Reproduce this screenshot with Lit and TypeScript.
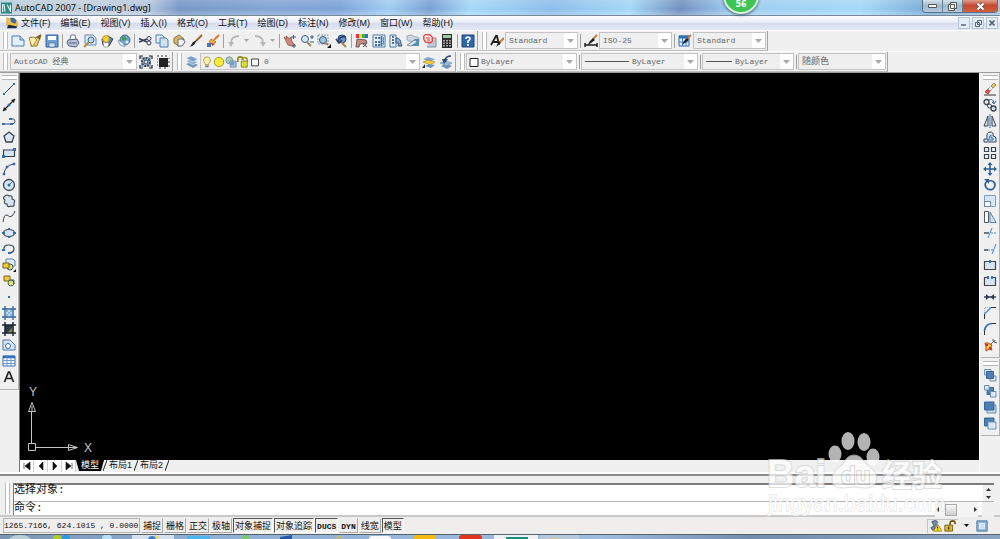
import { LitElement, html, svg, css } from "lit";
import { customElement } from "lit/decorators.js";
import { classMap } from "lit/directives/class-map.js";

const B = "#2f6fb5";
const D = "#3a4450";
const L = "#d6e6f4";
const Y = "#f2cf3a";

const ICONS: Record<string, unknown> = {
  new: svg`<path d="M1 2H9L13 6V12H1Z" fill="#e3f0fa" stroke="#4d7fae"/><path d="M9 2V6H13" fill="#a9cbe8" stroke="#4d7fae"/>`,
  open: svg`<path d="M2 3L7 4L13 1L9 12L3 12Z" fill="#f0d27a" stroke="#8f7430"/><path d="M1 4L6 3L9 6L4 13Z" fill="#fbeeb5" stroke="#a98a3c"/><path d="M8 3L13 0L12 6" fill="#7a6530"/>`,
  save: svg`<path d="M1 1H13V13H1Z" fill="#6f9fd0" stroke="#345f96"/><path d="M3 2H11V6H3Z" fill="#fff"/><path d="M4 9H10V13H4Z" fill="#d7e4f0" stroke="#345f96" stroke-width=".6"/>`,
  print: svg`<path d="M4 6L5 1H9L10 6" fill="#fff" stroke="#66769a"/><path d="M2 6L11 5L13 9L10 13L3 12L1 9Z" fill="#b8c2d8" stroke="#515f82"/><path d="M3 9L11 9" stroke="#515f82"/>`,
  preview: svg`<path d="M2 1H10L13 4V11H4L2 9Z" fill="#e2eefa" stroke="#5a89b5"/><circle cx="8" cy="6" r="3" fill="#b9d9f2" stroke="#3f607f"/><path d="M6 8L1 13" stroke="#b08c4e" stroke-width="2"/>`,
  publish: svg`<path d="M2 5L8 2L13 5L9 12L3 11Z" fill="#5e7fb3" stroke="#34486d"/><circle cx="6" cy="5" r="3.5" fill="${Y}" stroke="#9d7d1a" stroke-width=".7"/><path d="M3 8L9 9L8 13H4Z" fill="#fff" stroke="#777" stroke-width=".6"/>`,
  web: svg`<circle cx="8" cy="6" r="5" fill="#6fa6d8" stroke="#49698c"/><path d="M5 3Q8 1 10 5Q7 8 5 6Z" fill="#4f9a50"/><path d="M1 6L6 9L8 13L3 11Z" fill="#e5edf6" stroke="#7089a5" stroke-width=".7"/><circle cx="10" cy="8" r="1.5" fill="#e9f5ff"/>`,
  cut: svg`<path d="M1 4.500L9 8M1 8L9 5" stroke="#33425a" stroke-width="1.400"/><circle cx="11" cy="4.500" r="2" fill="none" stroke="#33425a"/><circle cx="11" cy="9" r="2" fill="none" stroke="#33425a"/>`,
  copy: svg`<path d="M1 1H7L9 3V9H1Z" fill="#e6f1fb" stroke="#4d7fae"/><path d="M5 4H11L13 6V13H5Z" fill="#cfe2f4" stroke="#4d7fae"/>`,
  paste: svg`<path d="M2 4L7 1L12 5L11 10L7 12L2 9Z" fill="#d9b964" stroke="#8b7233"/><path d="M6 5L11 5L13 8L10 12H6Z" fill="#eef3fa" stroke="#667"/>`,
  match: svg`<path d="M13 1L7 7" stroke="#98652f" stroke-width="2"/><path d="M8 6L5 11L1 13L4 8Z" fill="#222"/>`,
  brush: svg`<path d="M13 1L8 6" stroke="#e07a26" stroke-width="2"/><path d="M5 5L10 8L7 10L3 8Z" fill="#f1b63a" stroke="#a45e10" stroke-width=".7"/><path d="M1 9H5V13H1Z" fill="#3f77bd"/><path d="M5 9L9 10L6 12Z" fill="#c33"/>`,
  undo: svg`<path d="M12 2Q4 2 4 9" fill="none" stroke="#b8b8b8" stroke-width="1.800"/><path d="M1 8H7L4 13Z" fill="#b8b8b8"/>`,
  redo: svg`<path d="M2 2Q10 2 10 9" fill="none" stroke="#b8b8b8" stroke-width="1.800"/><path d="M7 8H13L10 13Z" fill="#b8b8b8"/>`,
  pan: svg`<path d="M1 3L4 5L3 2L7 5L8 3L9 8L12 11L9 12L5 11Z" fill="#cf8a7e" stroke="#8f4b44" stroke-width=".8"/><path d="M8 3H13M10.500 1V5M9 12H13M11 10V14" stroke="#345a86"/>`,
  zoomrt: svg`<circle cx="5" cy="5" r="3.500" fill="#cfe6f8" stroke="#44617e"/><path d="M7 8L11 12" stroke="#a7834b" stroke-width="2"/><path d="M10 3H14M12 1V5M10 8H14" stroke="#345a86"/>`,
  zoomwin: svg`<path d="M1 1H11V10H1Z" fill="none" stroke="#7d98b4" stroke-dasharray="2 1"/><circle cx="6" cy="6" r="3.500" fill="#9fc5e8" stroke="#35506c"/><path d="M8 8L11 11" stroke="#a7834b" stroke-width="2"/><path d="M14 10V14H10Z" fill="#111"/>`,
  zoomprev: svg`<circle cx="8" cy="5" r="4" fill="#6c97c7" stroke="#27415f"/><path d="M7 8L12 13" stroke="#a7834b" stroke-width="2"/><path d="M12 3Q6 2 5 6M2 5L5 9L8 6" fill="none" stroke="#1f3f66" stroke-width="1.500"/>`,
  props: svg`<path d="M1 0H4V4H1Z" fill="#e33"/><path d="M4 0H7V4H4Z" fill="#e7d631"/><path d="M7 0H10V4H7Z" fill="#31b84a"/><path d="M10 0H13V4H10Z" fill="#46c"/><path d="M2 5L11 6L12 9L5 10L4 13H1Z" fill="#c98c7c" stroke="#5a4250" stroke-width=".8"/><path d="M8 10L12 13M12 9L8 13" stroke="#445"/>`,
  center: svg`<path d="M1 1H13V13H1Z" fill="#eef6fc" stroke="#4579ab"/><path d="M3 3H5V5H3ZM3 7H5V9H3ZM6 3H8V5H6ZM6 7H8V9H6ZM3 10H5V12H3ZM6 10H8V12H6Z" fill="#3d6d9d"/><path d="M9.500 2V12" stroke="#4579ab" stroke-width="2"/><path d="M11.500 3V11" stroke="#b48a34"/>`,
  palettes: svg`<path d="M1 1H7V13H1Z" fill="#e5f0fa" stroke="#4579ab"/><path d="M3 3H5M3 6H5M3 9H5" stroke="#345" stroke-width="1.500"/><path d="M7 4Q12 4 12 10L13 12L9 12L10 9L7 9Z" fill="#8fb1d3" stroke="#35577c"/>`,
  sheet: svg`<path d="M1 2L5 1L13 4V8L8 9L1 6Z" fill="#cdd6df" stroke="#8797a8" stroke-width=".7"/><path d="M1 11L9 5L13 5V12H4Z" fill="#4f8fb8"/><path d="M1 11L9 6L11 8L5 12Z" fill="#dfe8ef" stroke="#678" stroke-width=".6"/>`,
  markup: svg`<path d="M5 4H13V13H4" fill="#bfcbd8" stroke="#8090a0"/><path d="M2 1Q4 0 5 1Q7 0 8 2Q10 3 9 5Q10 8 8 8Q6 10 5 8Q2 9 2 7Q0 5 1 4Q0 2 2 1Z" fill="#ffe9e9" stroke="#e23333" stroke-width="1.200"/><path d="M3 4H7M4 6H7" stroke="#e23333"/>`,
  calc: svg`<path d="M2 0H12V14H2Z" fill="#2b2b2b"/><path d="M3 1H11V4H3Z" fill="#9fc79f"/><path d="M4 6V13M7 6V13M10 6V13" stroke="#cfcfcf" stroke-width="1.500" stroke-dasharray="1.500 1"/>`,
  help: svg`<path d="M1 1H13V13H1Z" fill="#2f69a9" stroke="#1e4878"/><path d="M5 5Q5 3 7 3Q9 3 9 5Q9 6 7 7V9M7 10V12" fill="none" stroke="#fff" stroke-width="1.600"/>`,
  textstyle: svg`<path d="M1 11L6 2H7L9 11M3 8H9" fill="none" stroke="#222" stroke-width="1.800"/><path d="M14 4L10 8" stroke="#c07b3d" stroke-width="2"/><path d="M9 7L11 9L6 13Z" fill="#222"/>`,
  dimstyle: svg`<path d="M1 11H13M1 9V13M13 9V13" stroke="#222" stroke-width="1.500"/><path d="M13 1L9 5" stroke="#c07b3d" stroke-width="2"/><path d="M9 4L11 6L3 12L6 7Z" fill="#222"/>`,
  tablestyle: svg`<path d="M1 2H11V12H1Z" fill="#dcebfa" stroke="${B}"/><path d="M1 3H11" stroke="${B}" stroke-width="3"/><path d="M1 8H11M4.500 3V12M8 3V12" stroke="${B}" stroke-width=".8"/><path d="M13 1L9 5" stroke="#c07b3d" stroke-width="2"/><path d="M9 4L11 6L4 11L6 7Z" fill="#222"/>`,
  gear: svg`<path d="M1 4V1H4M10 1H13V4M1 10V13H4M13 10V13H10" fill="none" stroke="#222" stroke-width="1.200"/><path d="M2 2H12V12H2Z" fill="#a9bccf"/><circle cx="7" cy="7" r="4" fill="none" stroke="#34495e" stroke-width="2" stroke-dasharray="2 1"/><circle cx="7" cy="7" r="2" fill="#dfe8f0" stroke="#34495e"/>`,
  space: svg`<path d="M3 3H12V12H3Z" fill="#222"/><path d="M1 1H3M5 1H7M9 1H11M1 4H2M1 7H2M1 10H2M13 3V4M13 6V8M13 10V12M3 13H5M8 13H10" stroke="#333"/>`,
  layers: svg`<path d="M1 9L6 7L13 10L8 13Z" fill="#6f94b8"/><path d="M1 6L6 4L13 7L8 10Z" fill="#8fb0cf" stroke="#fff" stroke-width=".5"/><path d="M1 3L6 1L13 4L8 7Z" fill="#7aa0c5" stroke="#fff" stroke-width=".5"/>`,
  bulb: svg`<path d="M7 1Q11 1 11 5Q11 7 9 9V10H5V9Q3 7 3 5Q3 1 7 1Z" fill="#fff7a8" stroke="#a9973c"/><path d="M5 11H9V13H5Z" fill="#777"/>`,
  sun: svg`<circle cx="7" cy="7" r="5.500" fill="#f7ea3a" stroke="#a08b22"/>`,
  sunvp: svg`<circle cx="5" cy="5" r="4" fill="#a9cfa9" stroke="#6b8fa5"/><path d="M6 6H13V13H6Z" fill="#a3c2dd" stroke="#6d8eae"/><circle cx="8" cy="8" r="3" fill="#7ba0c0"/>`,
  lock: svg`<path d="M1 7V4Q1 1 4 1Q7 1 7 5" fill="none" stroke="#938b20" stroke-width="2"/><path d="M6 5V4Q7 2 9 2Q12 2 12 5V7" fill="none" stroke="#a59d2a" stroke-width="2"/><path d="M5 6H12V13H5Z" fill="#d8dc3c" stroke="#7f8224"/>`,
  swatch: svg`<path d="M3 3.500H11V11.500H3Z" fill="#fff" stroke="#222"/>`,
  laymk: svg`<path d="M1 4L6 2L13 4L8 7Z" fill="#86a8c9"/><path d="M1 7L6 5L13 7L8 10Z" fill="${Y}" stroke="#8c7730" stroke-width=".5"/><path d="M3 11L7 9L13 10L9 13Z" fill="#6f94b8"/><path d="M0 13L3 9V13Z" fill="#234"/>`,
  layprev: svg`<path d="M2 11L7 9L13 11L8 14Z" fill="#6f94b8"/><path d="M1 8L7 6L13 8L8 11Z" fill="#9bb8d4" stroke="#5c7fa3" stroke-width=".5"/><path d="M12 1Q7 1 6 5" fill="none" stroke="#27496f" stroke-width="1.600"/><path d="M3 4H9L5 9Z" fill="#27496f"/>`,
  line: svg`<path d="M2 12L12 2" stroke="${D}"/><path d="M1 11H3V13H1ZM11 1H13V3H11Z" fill="${B}"/>`,
  xline: svg`<path d="M1 13L13 1" stroke="#222" stroke-width="1.200"/><path d="M1 13L2 9L5 12ZM13 1L9 2L12 5Z" fill="#222"/><circle cx="7" cy="7" r="1.500" fill="${B}"/>`,
  pline: svg`<path d="M1 10H10Q13 10 13 7Q13 4 9 5" fill="none" stroke="#456"/><path d="M0 9H3V11H0ZM8 9H11V11H8ZM7 4H10V6H7Z" fill="${B}"/>`,
  polygon: svg`<path d="M7 2L12 6L10 12H4L2 6Z" fill="${L}" stroke="${D}" stroke-width="1.300"/>`,
  rect: svg`<path d="M1.500 4H12.500V10.500H1.500Z" fill="${L}" stroke="${D}" stroke-width="1.200"/><path d="M0 9H3V12H0ZM11 2H14V5H11Z" fill="${B}"/>`,
  arc: svg`<path d="M2 12Q3 3 12 2" fill="none" stroke="${D}"/><path d="M1 11H3V13H1ZM4 4H6V6H4ZM11 1H13V3H11Z" fill="${B}" stroke="${B}" stroke-width=".5"/>`,
  circle: svg`<circle cx="7" cy="7" r="5.500" fill="${L}" stroke="${D}" stroke-width="1.300"/><path d="M7 7L11 3" stroke="${B}"/><circle cx="7" cy="7" r="1.500" fill="${B}"/>`,
  cloud: svg`<path d="M3 6Q0 4 3 2Q5 0 7 2Q11 1 10 5Q14 6 12 9Q13 13 9 12Q5 14 5 10Q1 10 3 6Z" fill="${L}" stroke="${D}" stroke-width="1.100"/>`,
  spline: svg`<path d="M1 12Q2 4 5 5Q8 8 10 6Q12 4 13 1" fill="none" stroke="${D}"/>`,
  ellipse: svg`<ellipse cx="7" cy="7" rx="5.500" ry="3.500" fill="${L}" stroke="${D}" stroke-width="1.200"/><path d="M0 6H3V8H0ZM11 6H14V8H11ZM6 2H8V4H6ZM6 10H8V12H6Z" fill="${B}"/>`,
  earc: svg`<path d="M2 8Q1 3 7 3Q12 3 12 7Q12 10 8 11" fill="none" stroke="${D}" stroke-width="1.200"/><path d="M0 7H3V9H0ZM6 10H9V12H6Z" fill="${B}"/>`,
  insert: svg`<path d="M4 1H11L13 3V8H4Z" fill="#dcebf7" stroke="#5d87ad"/><circle cx="8" cy="9" r="3" fill="#dfe06a" stroke="#456"/><path d="M1 5H7V10H1Z" fill="${Y}" stroke="#6f6326"/><path d="M14 11V14H11Z" fill="#111"/>`,
  block: svg`<path d="M2 2H8V7H2Z" fill="${Y}" stroke="#6f6326"/><circle cx="9" cy="9" r="3" fill="#dfe06a" stroke="#4d6575"/><path d="M8 6H12V10" fill="none" stroke="#456"/>`,
  point: svg`<path d="M6 6H8V8H6Z" fill="${B}"/>`,
  hatch: svg`<path d="M3 3H11V11H3Z" fill="#bcd9f0"/><path d="M3 0V14M11 0V14M0 3H14M0 11H14" stroke="#2b5f95" stroke-width="1.300"/><path d="M3 7L7 3M3 11L11 3M7 11L11 7M3 7L7 11M3 3L11 11M7 3L11 7" stroke="#6c9bc8" stroke-width=".6"/>`,
  gradient: svg`<path d="M3 3H11V11H3Z" fill="#2e3a4a"/><path d="M5 11L11 5V11Z" fill="#8c8a4a"/><path d="M3 0V14M11 0V14M0 3H14M0 11H14" stroke="#1a2633" stroke-width="1.500"/>`,
  region: svg`<path d="M1 2H8L13 7V12H1Z" fill="${L}" stroke="#4b79a8"/><circle cx="6" cy="8" r="2.500" fill="#fff" stroke="${B}"/>`,
  table: svg`<path d="M1 2H13V12H1Z" fill="#fff" stroke="${B}"/><path d="M1 3H13" stroke="${B}" stroke-width="2.500"/><path d="M1 6.500H13M1 9.500H13M5 3V12M9 3V12" stroke="#6a9bd0"/>`,
  mtext: svg`<path d="M2.500 12L6.500 2H7.500L11.500 12M4 8.500H10" fill="none" stroke="#222" stroke-width="1.700"/>`,
  erase: svg`<path d="M1 13H13" stroke="#333"/><path d="M2 10L6 6L8 8L5 12Z" fill="#d9534a" stroke="#8d2f29" stroke-width=".7"/><path d="M5 7L8 4L10 6L7 9Z" fill="#f7f7f7" stroke="#777" stroke-width=".5"/><path d="M8 4L11 1L13 3L10 6Z" fill="#eec23b" stroke="#777" stroke-width=".7"/>`,
  copyobj: svg`<circle cx="3.500" cy="4" r="2.500" fill="none" stroke="${D}" stroke-width="1.300"/><path d="M6 2Q10 0 11 5M9 4L11 6L13 3" fill="none" stroke="${B}"/><circle cx="6.500" cy="8" r="2" fill="none" stroke="${D}"/><circle cx="10.500" cy="10.500" r="2.500" fill="#cde" stroke="${D}" stroke-width="1.300"/>`,
  mirror: svg`<path d="M5 2V12H1Z" fill="#dde" stroke="${D}"/><path d="M9 2V12H13Z" fill="${L}" stroke="${D}"/><path d="M7 0V14" stroke="${B}"/>`,
  offset: svg`<path d="M1 12V9H4Q3 2 7 2Q11 2 10 6Q13 6 13 9V12Z" fill="${L}" stroke="${D}"/><path d="M4 10H6Q6 5 8 5V8H10V10Z" fill="none" stroke="${B}"/>`,
  array: svg`<path d="M1.500 1.500H5.500V5.500H1.500ZM8.500 1.500H12.500V5.500H8.500ZM1.500 8.500H5.500V12.500H1.500ZM8.500 8.500H12.500V12.500H8.500Z" fill="#eef5fb" stroke="${D}" stroke-width="1.200"/>`,
  move: svg`<path d="M7 2V12M2 7H12" stroke="#2f5f93" stroke-width="1.600"/><path d="M7 0L9.500 3H4.500ZM7 14L9.500 11H4.500ZM0 7L3 4.500V9.500ZM14 7L11 4.500V9.500Z" fill="#2f5f93"/>`,
  rotate: svg`<path d="M4 3Q1 6 3 9.500Q6 13 10 11Q13 8 11.500 5Q10 2 6 3" fill="none" stroke="#2f5f93" stroke-width="1.700"/><path d="M1 1H6V6Z" fill="#2f5f93"/>`,
  scale: svg`<path d="M1.500 1.500H12.500V12.500H1.500Z" fill="${L}" stroke="#7c9fc0"/><path d="M1.500 7.500H7.500V12.500H1.500Z" fill="#fff" stroke="#6a859f"/>`,
  stretch: svg`<path d="M1.500 1.500H5.500V12.500H1.500Z" fill="#fff" stroke="#555"/><path d="M7 2L13 12.500H7Z" fill="${L}" stroke="#4f7fb0"/>`,
  trim: svg`<path d="M1 7H6" stroke="#333" stroke-width="1.300"/><path d="M5 12L9 2" stroke="#3a8bd8"/><path d="M8 7H13" stroke="#3a8bd8" stroke-dasharray="2 1"/>`,
  extend: svg`<path d="M1 8H5" stroke="#333" stroke-width="1.300"/><path d="M5 8H10" stroke="#3a8bd8" stroke-dasharray="2 1"/><path d="M9 12L13 2" stroke="#3a8bd8"/>`,
  breakpt: svg`<path d="M1.500 3.500H12.500V11.500H1.500Z" fill="${L}" stroke="#444" stroke-width="1.200"/><path d="M6 2H8V5H6Z" fill="${B}"/>`,
  break: svg`<path d="M4 3.500H1.500V11.500H12.500V3.500H10" fill="${L}" stroke="#444" stroke-width="1.200"/><path d="M4 2H6V5H4ZM8 2H10V5H8Z" fill="${B}"/>`,
  join: svg`<path d="M1 7H13" stroke="#223" stroke-width="1.300"/><path d="M3 4L6.500 7L3 10ZM11 4L7.500 7L11 10Z" fill="#223f63"/>`,
  chamfer: svg`<path d="M1.500 13V8M8 1.500H13" stroke="#333"/><path d="M1.500 8L8 1.500" stroke="#3a8bd8" stroke-width="1.300"/><path d="M1.500 7V1.500H7" fill="none" stroke="#aaa" stroke-dasharray="1 1"/>`,
  fillet: svg`<path d="M1.500 13V9M9 1.500H13" stroke="#333"/><path d="M1.500 9Q2 2 9 1.500" fill="none" stroke="${B}" stroke-width="1.600"/>`,
  explode: svg`<path d="M2 5L5 5L7 6L9 7L8 9L9 12L6 11L3 13L3 9Z" fill="#f1cf31" stroke="#c43a22"/><path d="M8 6L11 3M10 1V3M12 2L11 4L14 5" stroke="#555" fill="none"/><path d="M3 6H5V8H3ZM6 9H8V11H6Z" fill="#d23"/>`,
  front: svg`<path d="M1.500 1.500H8V7H1.500Z" fill="#dbe8f4" stroke="#6c8fb0"/><path d="M7 8H13V13H7Z" fill="#dbe8f4" stroke="#6c8fb0"/><path d="M3.500 3.500H10.500V10.500H3.500Z" fill="#4c7fb3" stroke="#3a6796"/>`,
  back: svg`<path d="M4 3.500H10.500V10.500H4Z" fill="#4c7fb3" stroke="#3a6796"/><path d="M1.500 1.500H6V6H1.500ZM7.500 7.500H13V13H7.500Z" fill="#dbe8f4" stroke="#6c8fb0"/>`,
  above: svg`<path d="M4 5H13V13H4Z" fill="#c9dcee" stroke="#6c8fb0"/><path d="M1.500 2H11V10H1.500Z" fill="#4c7fb3" stroke="#3a6796"/>`,
  under: svg`<path d="M1.500 2H11V10H1.500Z" fill="#4c7fb3" stroke="#3a6796"/><path d="M5 6H13V13H5Z" fill="#dbe8f4" stroke="#6c8fb0"/>`,
  app: svg`<path d="M0 0H14V14H0Z" fill="#2b8a84"/><path d="M2 12V3H4L5 12M8 3L12 11M12 3V12" fill="none" stroke="#d3f2ec" stroke-width="1.500"/>`,
  doc: svg`<path d="M1 1L6 3L10 2L13 5V11L1 10Z" fill="#f2c343" stroke="#c08d20" stroke-width=".7"/><path d="M5 1H9L12 4L11 8L6 6Z" fill="#3a6cb0"/><path d="M1 13L3 9L13 11L12 13Z" fill="#1d2a44"/>`,
  tray: svg`<path d="M2 2Q8 -1 9 3Q6 5 8 8L3 12L1 9L5 7Z" fill="#7289ab" stroke="#42536c"/><path d="M9 5L14 13H4Z" fill="#ffdd21" stroke="#8d7400" stroke-width=".8"/><path d="M9 8V10M9 11V12" stroke="#111" stroke-width="1.200"/>`,
  unlock: svg`<path d="M7 6V4Q7 1 10 1Q13 1 13 4V5" fill="none" stroke="#6b5612" stroke-width="1.800"/><path d="M1 6H10V13H1Z" fill="#dfb827" stroke="#6b5612"/><path d="M5.500 8V11" stroke="#222" stroke-width="1.500"/>`,
  clean: svg`<path d="M1 1H13V13H1Z" fill="#8fb6d8" stroke="#3f6c99"/><path d="M4 4H10V10H4Z" fill="#c7dff2" stroke="#e8f4ff"/>`,
};

const icon = (name: string) =>
  html`<svg class="ico" viewBox="0 0 14 14" width="14" height="14" aria-hidden="true">${ICONS[name]}</svg>`;
const tool = (name: string) => html`<button class="tool" aria-label=${name}>${icon(name)}</button>`;
const tools = (names: string) => names.split(" ").map(tool);
const caret = html`<svg class="caret" viewBox="0 0 7 4" width="7" height="4" aria-hidden="true"><path d="M0 0H7L3.500 4Z" fill="#a8a8a8"/></svg>`;
const sep = html`<span class="sep"></span>`;
const grip = html`<span class="grip"></span>`;
const drop = (label: string) => html`<button class="drop" aria-label=${label}><svg viewBox="0 0 5 3" width="5" height="3"><path d="M0 0H5L2.500 3Z" fill="#aaa"/></svg></button>`;

const combo = (cls: string, label: string, value: string, lead: unknown = "") => html`
  <label class="combo ${cls}">${lead}<select aria-label=${label}><option>${value}</option></select><span class="arrow">${caret}</span></label>`;

const MENUS = ["文件(F)", "编辑(E)", "视图(V)", "插入(I)", "格式(O)", "工具(T)", "绘图(D)", "标注(N)", "修改(M)", "窗口(W)", "帮助(H)"];
const DRAW = "line xline pline polygon rect arc circle cloud spline ellipse earc insert block point hatch gradient region table mtext";
const MODIFY = "erase copyobj mirror offset array move rotate scale stretch trim extend breakpt break join chamfer fillet explode";
const MODES: [string, boolean][] = [
  ["捕捉", false], ["栅格", false], ["正交", false], ["极轴", false], ["对象捕捉", true],
  ["对象追踪", true], ["DUCS", true], ["DYN", false], ["线宽", false], ["模型", true],
];

@customElement("app-root")
export class AppRoot extends LitElement {
  static styles = css`
    :host {
      display: flex;
      flex-direction: column;
      position: relative;
      height: 100vh;
      overflow: hidden;
      background: #f0f0f0;
      color: #111;
      font: 9px/12px "Liberation Sans", "Noto Sans CJK SC", sans-serif;
    }
    * { box-sizing: border-box; }
    button, select, input { margin: 0; padding: 0; border: 0; background: none; font: inherit; color: inherit; border-radius: 0; }
    svg { display: block; flex: none; }

    .title {
      display: flex;
      flex: none;
      height: 16px;
      padding-left: 1px;
      gap: 3px;
      border-bottom: 1px solid #74899c;
      background:
        linear-gradient(rgba(255, 255, 255, 0.15), rgba(255, 255, 255, 0) 60%, rgba(255, 255, 255, 0.25)),
        linear-gradient(100deg, #b9cedb 0%, #c2cfdc 9%, #b5c6dc 15%, #7797c8 18%, #82a5d4 27%, #7da3d8 34%, #a0cdf3 39%, #789fd4 43%, #a5d8f8 47%, #8dbdea 55%, #a4d7f6 63%, #7190bf 68%, #9ccbf0 73%, #a5d9f8 86%, #77a8d4 93%, #a4c4de 100%);
    }
    .title .ico { width: 11px; height: 12px; margin-top: 2px; }
    .title h1 { flex: 1; margin: 0; font: 9px/15px "Noto Sans", "Noto Sans CJK SC", sans-serif; }
    .winbtns { display: flex; height: 13px; margin-right: 2px; border: 1px solid #5d7184; border-top: 0; border-radius: 0 0 4px 4px; overflow: hidden; }
    .winbtns button { display: grid; place-items: center; width: 20px; border-right: 1px solid #6c8193; background: linear-gradient(#d3e3ef, #9fb8cc 50%, #b4cbdc); }
    .winbtns button:last-child { width: 34px; border: 0; background: linear-gradient(#e0a08e, #c44a2f 45%, #d5603e); }

    .menubar { display: flex; flex: none; align-items: center; height: 14px; padding: 0 2px 0 6px; background: linear-gradient(#fdfdff, #eaeef8 45%, #d6dcee 50%, #e3e8f5); }
    .menubar nav { display: flex; flex: 1; gap: 10px; padding-left: 3px; }
    .menubar nav button { color: #111; }
    .mdi { display: flex; gap: 2px; }
    .mdi button { display: grid; place-items: center; width: 12px; height: 12px; border: 1px solid #b4c5d6; background: #e2edf6; }

    .bars { display: flex; flex: none; height: 21px; gap: 1px; border-top: 1px solid #fff; }
    .bar { display: flex; align-items: center; padding: 0 1px 0 3px; border-right: 1px solid #a3a3a3; border-bottom: 1px solid #bdbdbd; }
    .grip { flex: none; width: 5px; height: 17px; margin-right: 1px; border: 1px solid #bcbcbc; border-width: 0 1px; background: #fff; }
    .sep { flex: none; width: 1px; height: 14px; margin: 0 1px 0 2px; background: #a0a0a0; }
    .tool { display: grid; place-items: center; flex: none; width: 17px; height: 17px; }
    .drop { display: grid; place-items: center; width: 9px; height: 16px; }
    .combo { display: flex; align-items: center; flex: none; height: 17px; border: 1px solid #c3c3c3; background: #efefef; color: #666; font: 8px/12px "Liberation Mono", "Noto Sans CJK SC", monospace; }
    .combo select { flex: 1; min-width: 0; height: 13px; padding-left: 3px; appearance: none; }
    .arrow { display: grid; place-items: center; align-self: stretch; width: 13px; background: #fff; }
    .style { width: 73px; }
    .work { width: 127px; margin-left: 1px; }
    .layer { width: 220px; }
    .color { width: 111px; }
    .ltype { width: 117px; }
    .lweight { width: 92px; }
    .plot { width: 88px; font-size: 9px; }
    .layer .ico { width: 12px; height: 12px; }
    .color select { padding-left: 0; }
    .stroke { flex: none; width: 44px; height: 1px; margin-left: 3px; background: #555; }
    .lweight .stroke { width: 26px; }

    .work-area { display: flex; flex: 1; min-height: 0; border-top: 1px solid #9b9b9b; }
    .dock { display: flex; flex-direction: column; flex: none; width: 19px; }
    .panel { display: flex; flex-direction: column; align-items: center; padding: 2px 1px 4px; border-right: 1px solid #b2b2b2; border-bottom: 1px solid #b2b2b2; }
    .panel .tool { height: 16px; }
    .hgrip { width: 15px; height: 5px; margin-bottom: 1px; border: 1px solid #b8b8b8; border-width: 1px 0; background: #fff; }
    .right { padding-left: 1px; width: 20px; gap: 1px; }
    .center { display: flex; flex-direction: column; flex: 1; min-width: 0; padding-bottom: 2px; border-left: 1px solid #777; border-right: 1px solid #fff; }
    .canvas { display: flex; align-items: flex-end; flex: 1; min-height: 0; background: #000; }
    .ucs text { font: 12px "Liberation Sans", sans-serif; fill: #c4c4c4; }
    .tabs { display: flex; flex: none; height: 12px; }
    .tabs .nav { display: grid; place-items: center; width: 14px; border-right: 1px solid #d0d0d0; background: #fff; }
    .tab { padding: 0 3px; line-height: 11px; height: 11px; }
    .on { padding: 0 5px; background: #000; color: #fff; clip-path: polygon(0 0, 100% 0, calc(100% - 3px) 100%, 3px 100%); }
    .slash { width: 4px; height: 11px; margin: 0 -1px; }

    .command { display: flex; flex: none; height: 43px; padding: 7px 6px 0 5px; gap: 3px; border-top: 2px solid #8c8c8c; border-bottom: 2px solid #c9c9c9; box-shadow: 0 -2px #fff; }
    .command .grip { height: 31px; margin: 0; }
    .cmdbox { flex: 1; min-width: 0; border-top: 2px solid #7b7b7b; border-left: 1px solid #7b7b7b; background: #fff; font: 11px/16px "Liberation Mono", "Noto Sans CJK SC", monospace; }
    .crow { display: flex; height: 16px; }
    .crow output { flex: 1; line-height: 10px; }
    .prompt { border-top: 1px solid #b5b5b5; line-height: 13px; }
    .prompt input { flex: 1; min-width: 0; outline: 0; padding: 0; }
    .vscroll { display: flex; flex-direction: column; justify-content: space-around; align-items: center; width: 11px; background: #f0f0f0; }
    .hscroll { display: flex; align-items: center; justify-content: space-between; width: 43px; margin-right: 4px; background: #f4f4f4; }
    .hscroll i { width: 12px; height: 12px; margin-right: 12px; border: 1px solid #aaa; background: linear-gradient(#f6f6f6, #d0d0d0); }
    .endcap { width: 12px; background: #f0f0f0; }

    .status { display: flex; flex: none; align-items: center; height: 17px; padding: 0 12px 0 3px; gap: 1px; background: #f0eeec; }
    .coords { width: 137px; height: 15px; border: 1px solid #b5b5b5; font: 8px/14px "Liberation Mono", monospace; white-space: pre; }
    .mode { height: 15px; padding: 2px 1px 0; border: 1px solid transparent; border-right-color: #aaa; border-bottom-color: #aaa; font: 9px/12px "Liberation Mono", "Noto Sans CJK SC", monospace; }
    .latin { font-size: 8px; font-weight: bold; }
    .pressed { border-color: #555 #fff #fff #555; }
    .tray { display: flex; align-items: center; gap: 2px; margin-left: auto; height: 14px; padding: 0 2px; border: 1px solid #c4c4c4; border-width: 1px 0 0 1px; }
    .tray .ico { width: 12px; height: 12px; }
    .more { display: grid; place-items: center; width: 14px; margin-right: 2px; }

    .taskbar { flex: none; height: 5px; border-top: 1px solid #59636f; background: linear-gradient(90deg, #7995b3, #8fb0d4 20%, #9dbce0 60%, #728dae 75%, #8aa5c1 100%); overflow: hidden; }

    .badge { position: absolute; top: -22px; left: 72.3%; width: 36px; height: 36px; border: 2px solid #d8f5dc; border-radius: 50%; background: #3cc455; color: #fff; font: bold 8px/12px "DejaVu Sans", sans-serif; text-align: center; padding-top: 19px; box-shadow: 0 1px 3px #456; }
    .mark { position: absolute; right: 52px; bottom: 20px; pointer-events: none; opacity: 0.7; }
    .mark text { fill: #fff; stroke: #cfcfcf; stroke-width: 2px; paint-order: stroke; }
    .mark .brand { font: bold 38px "Liberation Sans", sans-serif; }
    .mark .du { font: bold 24px "Liberation Sans", sans-serif; }
    .mark .cn { font: bold 30px "Noto Sans CJK SC", sans-serif; }
    .mark .site { font: 22px "Liberation Sans", sans-serif; stroke-width: 1px; }
  `;

  private titlebar() {
    return html`
      <header class="title">
        ${icon("app")}
        <h1>AutoCAD 2007 - [Drawing1.dwg]</h1>
        <div class="winbtns">
          <button aria-label="Minimize"><svg width="9" height="4"><path d="M0.500 0.500H8.500V3.500H0.500Z" fill="#fff" stroke="#555"/></svg></button>
          <button aria-label="Restore"><svg width="9" height="9"><path d="M2.500 .5H8.500V6.500H2.500ZM.5 2.500H6.500V8.500H.5Z" fill="#fff" stroke="#555"/></svg></button>
          <button aria-label="Close"><svg width="9" height="9"><path d="M1.500 1.500L7.500 7.500M7.500 1.500L1.500 7.500" stroke="#555" stroke-width="3.500"/><path d="M1.500 1.500L7.500 7.500M7.500 1.500L1.500 7.500" stroke="#fff" stroke-width="2"/></svg></button>
        </div>
      </header>
      <div class="menubar">
        <svg viewBox="0 0 14 14" width="12" height="12">${ICONS.doc}</svg>
        <nav>${MENUS.map((m) => html`<button>${m}</button>`)}</nav>
        <div class="mdi">
          <button aria-label="Minimize drawing"><svg width="6" height="6"><path d="M0 5H5" stroke="#567" stroke-width="1.500"/></svg></button>
          <button aria-label="Restore drawing"><svg width="7" height="7"><path d="M2.500 .5H6.500V4.500H2.500ZM.5 2.500H4.500V6.500H.5Z" fill="#e2edf6" stroke="#567"/></svg></button>
          <button aria-label="Close drawing"><svg width="6" height="6"><path d="M.5 .5L5.500 5.500M5.500 .5L.5 5.500" stroke="#567" stroke-width="1.600"/></svg></button>
        </div>
      </div>`;
  }

  private toolbars() {
    return html`
      <div class="bars">
        <div class="bar">
          ${grip}${tools("new open save")}${sep}${tools("print preview publish web")}${sep}
          ${tools("cut copy paste match brush")}${sep}${tool("undo")}${drop("undo list")}${tool("redo")}${drop("redo list")}${sep}
          ${tools("pan zoomrt zoomwin zoomprev")}${sep}${tools("props center palettes sheet markup calc")}${sep}${tool("help")}
        </div>
        <div class="bar">
          ${grip}${tool("textstyle")}${combo("style", "Text style", "Standard")}${sep}
          ${tool("dimstyle")}${combo("style", "Dimension style", "ISO-25")}${sep}
          ${tool("tablestyle")}${combo("style", "Table style", "Standard")}
        </div>
      </div>
      <div class="bars">
        <div class="bar">${grip}${combo("work", "Workspace", "AutoCAD 经典")}${tools("gear space")}</div>
        <div class="bar">
          ${grip}${tool("layers")}
          ${combo("layer", "Layer", "0", ["bulb", "sun", "sunvp", "lock", "swatch"].map(icon))}
          ${tools("laymk layprev")}
        </div>
        <div class="bar">
          ${grip}${combo("color", "Color", "ByLayer", icon("swatch"))}${sep}
          ${combo("ltype", "Linetype", "ByLayer", html`<span class="stroke"></span>`)}${sep}
          ${combo("lweight", "Lineweight", "ByLayer", html`<span class="stroke"></span>`)}${sep}
          ${combo("plot", "Plot style", "随颜色")}
        </div>
      </div>`;
  }

  private workArea() {
    const nav = ["M1 1V7M7 0V8L2 4Z", "M6 0V8L2 4Z", "M2 0V8L6 4Z", "M7 1V7M1 0V8L6 4Z"];
    const slash = html`<svg class="slash" viewBox="0 0 4 11"><path d="M4 0L0 11" stroke="#222"/></svg>`;
    return html`
      <main class="work-area">
        <aside class="dock"><div class="panel"><span class="hgrip"></span>${tools(DRAW)}</div></aside>
        <section class="center">
          <div class="canvas">
            <svg class="ucs" width="76" height="80" fill="none" stroke="#c4c4c4">
              <path d="M8.500 63.500H15.500V70.500H8.500ZM11.500 63V31M8.500 31.500H15.500L12 22.500ZM16 67.500H48M48.500 64.500V70.500L57.500 67.500ZM48 67.500H57M12 31V26"/>
              <text x="9" y="16" stroke="none">Y</text><text x="64" y="72" stroke="none">X</text>
            </svg>
          </div>
          <div class="tabs">
            ${nav.map((d, i) => html`<button class="nav" aria-label=${"tab scroll " + (i + 1)}><svg width="8" height="8"><path d=${d} fill="#111" stroke="#111" stroke-width=".6"/></svg></button>`)}
            <button class="tab on">模型</button>${slash}
            <button class="tab">布局1</button>${slash}
            <button class="tab">布局2</button>${slash}
          </div>
        </section>
        <aside class="dock right">
          <div class="panel"><span class="hgrip"></span>${tools(MODIFY)}</div>
          <div class="panel"><span class="hgrip"></span>${tools("front back above under")}</div>
        </aside>
      </main>`;
  }

  private commandArea() {
    const tri = (d: string) => html`<svg width="5" height="5"><path d=${d} fill="#333"/></svg>`;
    return html`
      <section class="command">
        ${grip}
        <div class="cmdbox">
          <div class="crow"><output>选择对象:</output><span class="vscroll">${tri("M0 4H5L2.500 1Z")}${tri("M0 1H5L2.500 4Z")}</span></div>
          <div class="crow prompt">
            <label for="cmd">命令:</label><input id="cmd" type="text" />
            <span class="hscroll">${tri("M4 0V5L1 2.500Z")}<i></i>${tri("M1 0V5L4 2.500Z")}</span><span class="endcap"></span>
          </div>
        </div>
      </section>
      <footer class="status">
        <output class="coords">1265.7166, 624.1015 , 0.0000</output>
        ${MODES.map(([t, on]) => html`<button class=${classMap({ mode: true, pressed: on, latin: /^[A-Z]/.test(t) })}>${t}</button>`)}
        <span class="tray">${icon("tray")}${icon("unlock")}</span>
        <button class="more" aria-label="Status menu"><svg width="5" height="3"><path d="M0 0H5L2.500 3Z" fill="#111"/></svg></button>
        <button aria-label="Clean screen"><svg viewBox="0 0 14 14" width="12" height="12">${ICONS.clean}</svg></button>
      </footer>
      <div class="taskbar">
        <svg width="1000" height="4">
          <ellipse cx="20" cy="5" rx="11" ry="5" fill="#b9cfd8"/>
          <circle cx="57" cy="4" r="4" fill="#b5cc20"/><circle cx="66" cy="4" r="4" fill="#2b9be0"/>
          <circle cx="107" cy="4" r="5" fill="#b7e1f5"/><path d="M132 0H174V4H132Z" fill="#d6e1ee"/><circle cx="152" cy="5" r="4" fill="#3a7fd0"/>
          <path d="M155 0L160 3H155Z" fill="#f5cf2c"/><path d="M187 1H210V4H187Z" fill="#49b6f0"/><circle cx="246" cy="4" r="4" fill="#7cc86a"/>
          <path d="M280 2L292 0V4H280Z" fill="#2459a8"/><circle cx="340" cy="5" r="4" fill="none" stroke="#dfb84c"/>
          <rect x="369" y="1" width="22" height="6" rx="3" fill="#f8f8f8"/><rect x="414" y="0" width="22" height="6" rx="3" fill="#f6b90f"/>
          <rect x="459" y="0" width="23" height="6" rx="3" fill="#e2341d"/><path d="M494 0H538V4H494Z" fill="#eef2f6"/><path d="M506 2H528V4H506Z" fill="#188f7c"/>
          <path d="M540 0H579V4H540Z" fill="#b5c8dc"/><path d="M549 3H560V4H549Z" fill="#d9c579"/>
        </svg>
      </div>`;
  }

  render() {
    return html`
      ${this.titlebar()}${this.toolbars()}${this.workArea()}${this.commandArea()}
      <span class="badge">56</span>
      <svg class="mark" width="182" height="90">
        <g fill="#fff">
          <ellipse cx="69" cy="25" rx="6.500" ry="8.500"/><ellipse cx="82" cy="12" rx="6.500" ry="9"/>
          <ellipse cx="98" cy="13" rx="6.500" ry="9"/><ellipse cx="107" cy="28" rx="6.500" ry="8.500"/>
          <path d="M88 26Q95 26 99 34Q111 42 111 50Q109 60 98 59Q88 57 78 59Q65 60 66 49Q67 42 77 35Q81 26 88 26Z" stroke="#cfcfcf"/>
        </g>
        <text class="brand" x="1" y="58">Bai</text>
        <text class="du" x="75" y="55">du</text>
        <text class="cn" x="116" y="57">经验</text>
        <text class="site" x="2" y="82">jingyan.baidu.com</text>
      </svg>`;
  }
}
